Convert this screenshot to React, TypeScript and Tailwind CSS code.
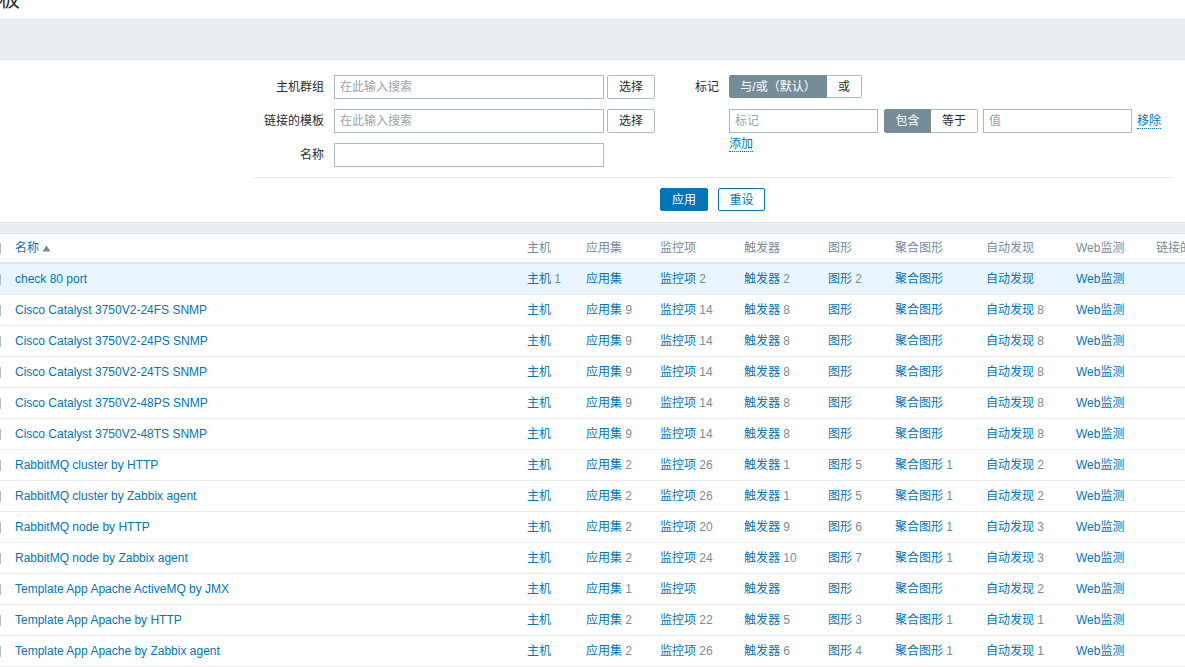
import React from "react";

type Cell = { label: string; count?: string };
type Row = { name: string; cells: Cell[]; hl?: boolean };

const FONT = "font-['Liberation_Sans','Noto_Sans_CJK_SC',sans-serif]";

const mk = (
  host: string,
  app: string,
  item: string,
  trig: string,
  graph: string,
  screen: string,
  disc: string
): Cell[] => [
  { label: "主机", count: host },
  { label: "应用集", count: app },
  { label: "监控项", count: item },
  { label: "触发器", count: trig },
  { label: "图形", count: graph },
  { label: "聚合图形", count: screen },
  { label: "自动发现", count: disc },
  { label: "Web监测" },
];

const rows: Row[] = [
  { name: "check 80 port", cells: mk("1", "", "2", "2", "2", "", ""), hl: true },
  { name: "Cisco Catalyst 3750V2-24FS SNMP", cells: mk("", "9", "14", "8", "", "", "8") },
  { name: "Cisco Catalyst 3750V2-24PS SNMP", cells: mk("", "9", "14", "8", "", "", "8") },
  { name: "Cisco Catalyst 3750V2-24TS SNMP", cells: mk("", "9", "14", "8", "", "", "8") },
  { name: "Cisco Catalyst 3750V2-48PS SNMP", cells: mk("", "9", "14", "8", "", "", "8") },
  { name: "Cisco Catalyst 3750V2-48TS SNMP", cells: mk("", "9", "14", "8", "", "", "8") },
  { name: "RabbitMQ cluster by HTTP", cells: mk("", "2", "26", "1", "5", "1", "2") },
  { name: "RabbitMQ cluster by Zabbix agent", cells: mk("", "2", "26", "1", "5", "1", "2") },
  { name: "RabbitMQ node by HTTP", cells: mk("", "2", "20", "9", "6", "1", "3") },
  { name: "RabbitMQ node by Zabbix agent", cells: mk("", "2", "24", "10", "7", "1", "3") },
  { name: "Template App Apache ActiveMQ by JMX", cells: mk("", "1", "", "", "", "", "2") },
  { name: "Template App Apache by HTTP", cells: mk("", "2", "22", "5", "3", "1", "1") },
  { name: "Template App Apache by Zabbix agent", cells: mk("", "2", "26", "6", "4", "1", "1") },
];

const GRID =
  "grid grid-cols-[15px_512px_59px_74px_84px_84px_67px_91px_90px_80px_1fr] items-center";

const headers = ["主机", "应用集", "监控项", "触发器", "图形", "聚合图形", "自动发现", "Web监测", "链接的模板"];

function Checkbox() {
  return (
    <div className="-ml-[12px] w-[13px] h-[13px] border border-[#acbbc2] rounded-[2px] bg-white" />
  );
}

function TextInput({ w, placeholder }: { w: string; placeholder?: string }) {
  return (
    <div
      className={`${w} h-[24px] border border-[#acbbc2] bg-white flex items-center pl-[5px] text-[#9ba4aa]`}
    >
      {placeholder}
    </div>
  );
}

function SelectBtn() {
  return (
    <div className="w-[48px] h-[24px] border border-[#acbbc2] rounded-[2px] bg-white flex items-center justify-center text-[#1f2c33]">
      选择
    </div>
  );
}

export default function App() {
  return (
    <div className={`w-[1185px] h-[667px] overflow-hidden bg-white text-[12px] text-[#1f2c33] ${FONT}`}>
      {/* title */}
      <div className="h-[19px] overflow-hidden">
        <div className="-mt-[15px] -ml-[22px] text-[21px] leading-[28px] text-[#1f2c33]">模板</div>
      </div>
      {/* top gray bar */}
      <div className="h-[41px] bg-[#ebeef0] border-y border-[#dfe4e7]" />

      {/* filter */}
      <div className="h-[162px] pt-[15px]">
        <div className="ml-[253px] w-[919px] flex">
          {/* left column */}
          <div className="flex flex-col gap-[10px]">
            <div className="flex items-center">
              <div className="w-[71px] text-right pr-0">主机群组</div>
              <div className="ml-[10px]">
                <TextInput w="w-[270px]" placeholder="在此输入搜索" />
              </div>
              <div className="ml-[3px]">
                <SelectBtn />
              </div>
            </div>
            <div className="flex items-center">
              <div className="w-[71px] text-right">链接的模板</div>
              <div className="ml-[10px]">
                <TextInput w="w-[270px]" placeholder="在此输入搜索" />
              </div>
              <div className="ml-[3px]">
                <SelectBtn />
              </div>
            </div>
            <div className="flex items-center">
              <div className="w-[71px] text-right">名称</div>
              <div className="ml-[10px]">
                <TextInput w="w-[270px]" />
              </div>
            </div>
          </div>

          {/* right column */}
          <div className="ml-[10px] flex flex-col">
            <div className="flex items-center h-[23px]">
              <div className="w-[54px] text-right">标记</div>
              <div className="ml-[10px] flex h-[23px]">
                <div className="w-[98px] bg-[#768d99] border border-[#768d99] rounded-l-[2px] text-white flex items-center justify-center">
                  与/或（默认）
                </div>
                <div className="w-[35px] bg-white border border-[#acbbc2] border-l-0 rounded-r-[2px] flex items-center justify-center">
                  或
                </div>
              </div>
            </div>
            <div className="flex items-center mt-[11px] ml-[64px]">
              <TextInput w="w-[149px]" placeholder="标记" />
              <div className="ml-[6px] flex h-[24px]">
                <div className="w-[47px] bg-[#768d99] border border-[#768d99] rounded-l-[2px] text-white flex items-center justify-center">
                  包含
                </div>
                <div className="w-[47px] bg-white border border-[#acbbc2] border-l-0 rounded-r-[2px] flex items-center justify-center">
                  等于
                </div>
              </div>
              <div className="ml-[5px]">
                <TextInput w="w-[149px]" placeholder="值" />
              </div>
              <div className="ml-[5px] text-[#0275b8] border-b border-dotted border-[#0275b8] leading-[14px]">
                移除
              </div>
            </div>
            <div className="ml-[64px] mt-[4px] flex">
              <div className="text-[#0275b8] border-b border-dotted border-[#0275b8] leading-[14px]">添加</div>
            </div>
          </div>
        </div>
        <div className="ml-[253px] w-[919px] mt-[10px] border-t border-[#e7eaec]" />
        <div className="ml-[253px] w-[919px] mt-[10px] flex justify-center gap-[10px]">
          <div className="w-[48px] h-[23px] bg-[#0275b8] border border-[#0275b8] rounded-[2px] text-white flex items-center justify-center">
            应用
          </div>
          <div className="w-[47px] h-[23px] bg-white border border-[#0275b8] rounded-[2px] text-[#0275b8] flex items-center justify-center">
            重设
          </div>
        </div>
      </div>

      {/* gray band */}
      <div className="h-[12px] bg-[#ebeef0] border-y border-[#dfe4e7]" />

      {/* table header */}
      <div className={`${GRID} h-[30px] border-b-2 border-[#dfe4e7] whitespace-nowrap`}>
        <Checkbox />
        <div className="flex items-center gap-[3px]">
          <span className="text-[#0275b8]">名称</span>
          <svg width="9" height="7" viewBox="0 0 9 7">
            <path d="M0.5 6.5 L4.5 0.5 L8.5 6.5 Z" fill="#768d99" />
          </svg>
        </div>
        {headers.map((h) => (
          <div key={h} className="text-[#768d99] overflow-hidden">
            {h}
          </div>
        ))}
      </div>

      {/* rows */}
      {rows.map((r) => (
        <div
          key={r.name}
          className={`${GRID} h-[31px] border-b border-[#ebeef0] whitespace-nowrap ${r.hl ? "bg-[#e8f5ff]" : "bg-white"}`}
        >
          <Checkbox />
          <div className="text-[#0275b8]">{r.name}</div>
          {r.cells.map((c) => (
            <div key={c.label}>
              <span className="text-[#0275b8]">{c.label}</span>
              {c.count ? <span className="text-[#768d99]"> {c.count}</span> : null}
            </div>
          ))}
          <div />
        </div>
      ))}
    </div>
  );
}
